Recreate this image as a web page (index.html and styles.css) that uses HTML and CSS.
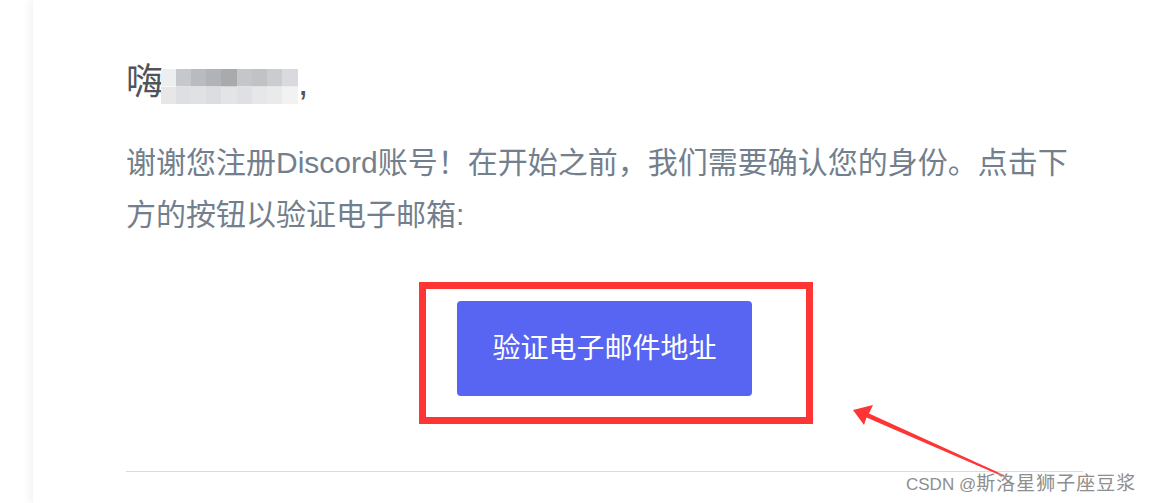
FILE: index.html
```html
<!DOCTYPE html>
<html lang="zh-CN">
<head>
  <meta charset="UTF-8">
  <meta name="viewport" content="width=device-width, initial-scale=1.0">
  <title>验证电子邮件地址</title>
  <link rel="stylesheet" href="styles.css">
</head>
<body>
  <div class="page">
    <div class="mail">
      <h1 class="greeting">嗨<span class="mosaic"></span>,</h1>
      <p class="message">谢谢您注册Discord账号！在开始之前，我们需要确认您的身份。点击下方的按钮以验证电子邮箱:</p>
      <div class="actions">
        <a class="button" href="#">验证电子邮件地址</a>
      </div>
      <hr class="divider">
    </div>
  </div>

  <!-- screenshot annotation -->
  <svg class="markup" width="1153" height="503" viewBox="0 0 1153 503">
    <rect x="422.5" y="285.5" width="387" height="135" fill="none" stroke="#fd3535" stroke-width="7"/>
    <polygon points="853,410 873,405 869,413.5 1005,475.5 1004,477 866.5,417.5 864,425" fill="#fd3535"/>
  </svg>

  <div class="watermark">CSDN @<span class="wm-name">斯洛星狮子座豆浆</span></div>
</body>
</html>
```

FILE: styles.css
```css
:root {
  --heading: #4f545c;
  --text: #737f8d;
  --blurple: #5865f2;
  --line: #dcdcdc;
}
* { box-sizing: border-box; }
body {
  margin: 0;
  background: #fff;
  font-family: "Liberation Sans", "Noto Sans CJK SC", sans-serif;
  overflow: hidden;
}
.page {
  padding-left: 33px;
  height: 503px;
}
.mail {
  height: 100%;
  background: #fff;
  box-shadow: -4px 0 8px rgba(0, 0, 0, 0.05);
  padding: 61px 70px 0 93px;
}
.greeting {
  margin: 0;
  font-size: 37px;
  font-weight: 400;
  line-height: 44px;
  color: var(--heading);
}
.mosaic {
  display: inline-block;
  width: 137px;
  height: 35px;
  margin-left: -2px;
  vertical-align: -9px;
  background:
    linear-gradient(to right,
      #eceef0 0 15px, #c5c8cc 15px 30px, #b8bcc0 30px 45px, #b0b4b8 45px 60px,
      #a8aaac 60px 76px, #c4c6ca 76px 91px, #c0c2c4 91px 106px, #cacccf 106px 121px,
      #d8dadd 121px) top / 100% 50% no-repeat,
    linear-gradient(to right,
      #e8e6e6 0 15px, #dddfe3 15px 30px, #e0e1e3 30px 45px, #dcdde0 45px 60px,
      #e3e4e6 60px 76px, #dfe0e3 76px 91px, #e7e7e9 91px 106px, #e9eaec 106px 121px,
      #f2f2f3 121px) bottom / 100% 50% no-repeat;
}
.message {
  margin: 32px 0 0;
  font-size: 30px;
  line-height: 52px;
  color: var(--text);
}
.actions {
  display: flex;
  justify-content: center;
  margin-top: 60px;
}
.button {
  display: block;
  padding: 28px 35px;
  font-size: 28px;
  line-height: 39px;
  color: #fff;
  text-decoration: none;
  background: var(--blurple);
  border-radius: 4px;
}
.divider {
  margin: 75px 0 0;
  border: 0;
  border-top: 1px solid var(--line);
}
.markup {
  position: absolute;
  top: 0;
  left: 0;
  pointer-events: none;
}
.watermark {
  position: absolute;
  left: 906px;
  top: 472px;
  font-size: 17px;
  line-height: 24px;
  color: #8e8e8e;
  text-shadow: 0 0 2px #fff;
  white-space: nowrap;
}
.wm-name {
  font-size: 19px;
  letter-spacing: 1px;
}
```
